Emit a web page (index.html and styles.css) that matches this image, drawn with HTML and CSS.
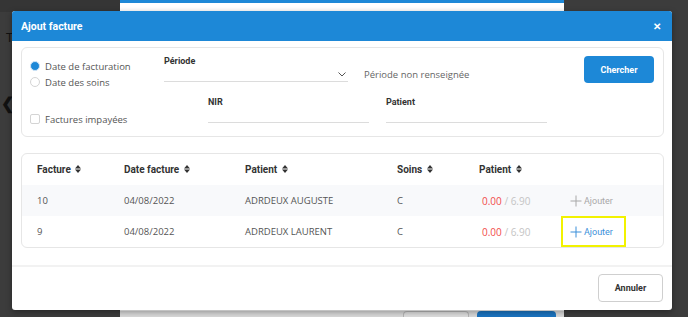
FILE: index.html
```html
<!DOCTYPE html>
<html lang="fr">

<head>
    <meta charset="utf-8">
    <meta name="viewport" content="width=device-width, initial-scale=1.0">
    <title>Ajout facture</title>
    <link rel="stylesheet" href="styles.css">
</head>

<body>
    <div class="page">
        <div class="cote">
            <span class="cote-titre">T</span>
            <span class="cote-fleche">&#10094;</span>
        </div>
        <div class="fond-dialog">
            <div class="fond-haut"></div>
            <div class="fond-corps"></div>
            <div class="fond-pied">
                <span class="fond-btn"></span>
                <span class="fond-btn bleu"></span>
            </div>
        </div>
    </div>

    <div class="modal">
        <header class="modal-entete">
            <h1>Ajout facture</h1>
            <span class="fermer">&#10005;</span>
        </header>

        <div class="modal-corps">
            <section class="filtres">
                <div class="options">
                    <label class="option"><span class="radio actif"></span>Date de facturation</label>
                    <label class="option"><span class="radio"></span>Date des soins</label>
                    <label class="option impayees"><span class="case"></span>Factures impayées</label>
                </div>
                <div class="champs">
                    <div class="ligne">
                        <div class="champ periode">
                            <p class="etiquette">Période</p>
                            <div class="saisie">
                                <svg width="8" height="5" viewBox="0 0 8 5"><path d="M0.5 0.5 L4 4 L7.5 0.5" fill="none" stroke="#555" stroke-width="1"/></svg>
                            </div>
                        </div>
                        <p class="info">Période non renseignée</p>
                        <button class="chercher">Chercher</button>
                    </div>
                    <div class="ligne deux">
                        <div class="champ nir">
                            <p class="etiquette">NIR</p>
                            <div class="saisie"></div>
                        </div>
                        <div class="champ patient">
                            <p class="etiquette">Patient</p>
                            <div class="saisie"></div>
                        </div>
                    </div>
                </div>
            </section>

            <section class="resultats">
                <table>
                    <thead>
                        <tr>
                            <th class="c1">Facture <svg class="tri" width="6" height="8" viewBox="0 0 6 8"><path d="M0 3.4 L3 0 L6 3.4 Z M0 4.6 L3 8 L6 4.6 Z" fill="#333"/></svg></th>
                            <th class="c2">Date facture <svg class="tri" width="6" height="8" viewBox="0 0 6 8"><path d="M0 3.4 L3 0 L6 3.4 Z M0 4.6 L3 8 L6 4.6 Z" fill="#333"/></svg></th>
                            <th class="c3">Patient <svg class="tri" width="6" height="8" viewBox="0 0 6 8"><path d="M0 3.4 L3 0 L6 3.4 Z M0 4.6 L3 8 L6 4.6 Z" fill="#333"/></svg></th>
                            <th class="c4">Soins <svg class="tri" width="6" height="8" viewBox="0 0 6 8"><path d="M0 3.4 L3 0 L6 3.4 Z M0 4.6 L3 8 L6 4.6 Z" fill="#333"/></svg></th>
                            <th class="c5">Patient <svg class="tri" width="6" height="8" viewBox="0 0 6 8"><path d="M0 3.4 L3 0 L6 3.4 Z M0 4.6 L3 8 L6 4.6 Z" fill="#333"/></svg></th>
                            <th></th>
                        </tr>
                    </thead>
                    <tbody>
                        <tr class="pair">
                            <td>10</td>
                            <td>04/08/2022</td>
                            <td>ADRDEUX AUGUSTE</td>
                            <td>C</td>
                            <td class="montant"><span class="du">0.00</span> / 6.90</td>
                            <td><span class="ajouter"><svg width="12" height="12" viewBox="0 0 12 12"><path d="M6 0.5 V11.5 M0.5 6 H11.5" stroke="currentColor" stroke-width="1"/></svg>Ajouter</span></td>
                        </tr>
                        <tr>
                            <td>9</td>
                            <td>04/08/2022</td>
                            <td>ADRDEUX LAURENT</td>
                            <td>C</td>
                            <td class="montant"><span class="du">0.00</span> / 6.90</td>
                            <td><span class="ajouter actif"><svg width="12" height="12" viewBox="0 0 12 12"><path d="M6 0.5 V11.5 M0.5 6 H11.5" stroke="currentColor" stroke-width="1"/></svg>Ajouter</span></td>
                        </tr>
                    </tbody>
                </table>
            </section>
        </div>

        <footer class="modal-pied">
            <button class="annuler">Annuler</button>
        </footer>
    </div>
</body>

</html>
```

FILE: styles.css
```css
body {
    margin: 0;
    background-color: #3c3c3c;
    font-family: 'Open Sans', sans-serif;
    overflow: hidden;
}

.page {
    display: flex;
    height: 317px;
}

/* arriere-plan */

.cote {
    width: 120px;
    position: relative;
    border-top: 12px solid #353535;
}

.cote-titre {
    position: absolute;
    left: 6px;
    top: 16px;
    color: #111;
    font-size: 13px;
}

.cote-fleche {
    position: absolute;
    left: 1px;
    top: 80px;
    color: #111;
    font-size: 16px;
    font-weight: bold;
}

.fond-dialog {
    width: 444px;
    display: flex;
    flex-direction: column;
    background-color: #d6d6d6;
}

.fond-haut {
    height: 3px;
    background-color: #1d88d7;
}

.fond-corps {
    height: 8px;
    background-color: #fff;
    flex: 1;
}

.fond-pied {
    height: 6px;
    display: flex;
    justify-content: flex-end;
    gap: 8px;
    padding-right: 8px;
    background-color: #d9d9d9;
}

.fond-btn {
    width: 64px;
    background-color: #dedede;
    border: 1px solid #b5b5b5;
    border-bottom: none;
    border-radius: 4px 4px 0 0;
}

.fond-btn.bleu {
    width: 79px;
    border: none;
    background-color: #1b74c0;
}

/* modal */

.modal {
    position: absolute;
    left: 12px;
    top: 11px;
    width: 660px;
    height: 299px;
    background-color: #fff;
    border-radius: 3px;
    box-shadow: 0 2px 6px rgba(0, 0, 0, 0.35);
    display: flex;
    flex-direction: column;
}

.modal-entete {
    height: 30px;
    background-color: #1d88d7;
    border-radius: 3px 3px 0 0;
    display: flex;
    align-items: center;
    justify-content: space-between;
    padding: 0 9px;
}

.modal-entete h1 {
    margin: 0;
    color: #fff;
    font-family: Roboto, sans-serif;
    font-size: 10.5px;
    font-weight: bold;
}

.fermer {
    color: #fff;
    font-size: 10px;
    font-weight: bold;
    margin-right: 2px;
}

.modal-corps {
    padding: 6px 8px 0 9px;
}

.filtres {
    height: 88px;
    border: 1px solid #e6e6e6;
    border-radius: 6px;
    display: flex;
    padding-left: 8px;
}

.options {
    width: 134px;
    padding-top: 10px;
    display: flex;
    flex-direction: column;
}

.option {
    display: flex;
    align-items: center;
    height: 16px;
    font-size: 9.5px;
    color: #555;
}

.option.impayees {
    margin-top: 21px;
}

.radio {
    width: 8px;
    height: 8px;
    border: 1px solid #d4d4d4;
    border-radius: 50%;
    margin-right: 5px;
}

.radio.actif {
    background-color: #1d88d7;
    border-color: #cfe3f5;
}

.case {
    width: 8px;
    height: 8px;
    border: 1px solid #d4d4d4;
    border-radius: 2px;
    margin-right: 5px;
}

.champs {
    flex: 1;
    padding-top: 7px;
}

.ligne {
    display: flex;
    align-items: flex-start;
}

.ligne.deux {
    margin-top: 13px;
    padding-left: 44px;
}

.champ p {
    margin: 0;
}

.etiquette {
    font-family: Roboto, sans-serif;
    font-size: 9px;
    font-weight: bold;
    color: #333;
    line-height: 12px;
}

.saisie {
    height: 14px;
    border-bottom: 1px solid #dcdcdc;
    display: flex;
    justify-content: flex-end;
    align-items: center;
    padding-right: 2px;
}

.periode {
    width: 184px;
}

.nir {
    width: 161px;
}

.patient {
    width: 161px;
    margin-left: 17px;
}

.info {
    margin: 13px 0 0 16px;
    font-size: 9.5px;
    color: #666;
    flex: 1;
}

.chercher {
    margin: 1px 9px 0 0;
    width: 70px;
    height: 27px;
    border: none;
    border-radius: 4px;
    background-color: #1d88d7;
    color: #fff;
    font-family: Roboto, sans-serif;
    font-size: 9px;
    font-weight: bold;
}

/* tableau */

.resultats {
    margin-top: 16px;
    border: 1px solid #e6e6e6;
    border-radius: 6px;
    overflow: hidden;
}

table {
    width: 100%;
    border-collapse: collapse;
}

th {
    height: 31px;
    text-align: left;
    font-family: Roboto, sans-serif;
    font-size: 10px;
    font-weight: bold;
    color: #333;
    padding: 0;
}

.tri {
    margin-left: 2px;
}

.c1 {
    width: 87px;
    padding-left: 15px;
}

.c2 {
    width: 121px;
}

.c3 {
    width: 152px;
}

.c4 {
    width: 82px;
}

.c5 {
    width: 91px;
}

td {
    height: 31px;
    padding: 0;
    font-size: 9.5px;
    color: #555;
}

td:first-child {
    padding-left: 15px;
}

tr.pair {
    background-color: #f8f9fb;
}

td.montant {
    padding-left: 3px;
    color: #c4c4c4;
    font-size: 10px;
}

.du {
    color: #f24b4b;
}

.ajouter {
    display: inline-flex;
    align-items: center;
    gap: 2px;
    height: 27px;
    padding: 0 11px 0 7px;
    margin-left: -9px;
    border: 2px solid transparent;
    color: #a8a8a8;
    font-family: Roboto, sans-serif;
    font-size: 9px;
}

.ajouter.actif {
    color: #3a8fd9;
    border-color: #f2f200;
}

/* pied */

.modal-pied {
    margin-top: auto;
    border-top: 2px solid #f2f2f2;
    padding: 7px 9px 8px;
    display: flex;
    justify-content: flex-end;
}

.annuler {
    width: 65px;
    height: 28px;
    background-color: #fff;
    border: 1px solid #cfcfcf;
    border-radius: 4px;
    font-family: Roboto, sans-serif;
    font-size: 9px;
    font-weight: bold;
    color: #333;
}
```
